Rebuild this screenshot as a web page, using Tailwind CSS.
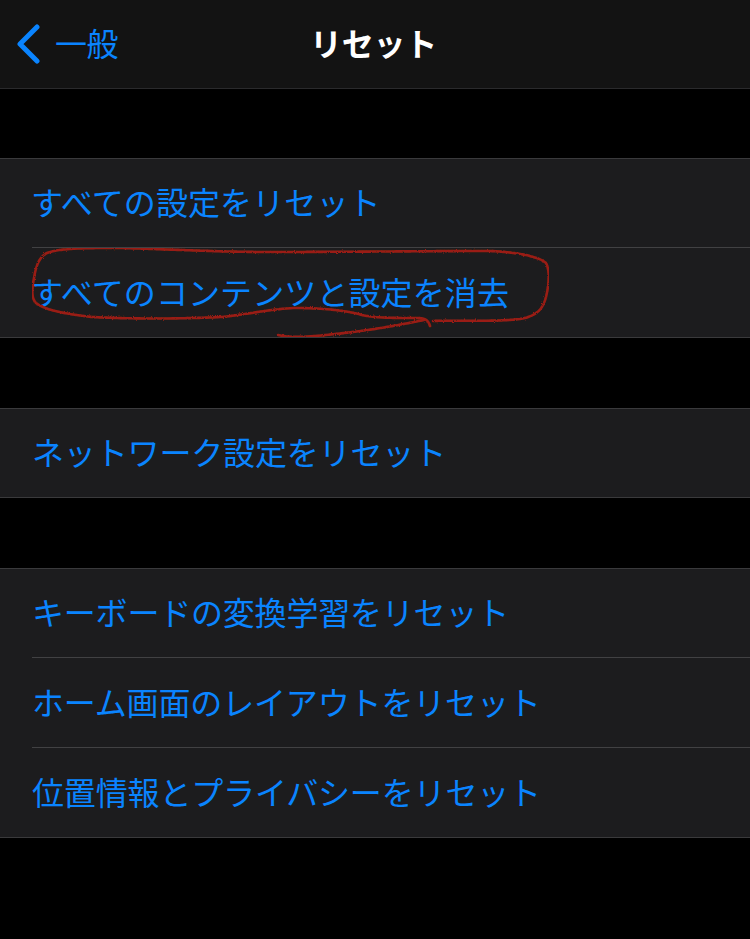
<!DOCTYPE html>
<html lang="ja">

<head>
    <meta charset="UTF-8">
    <meta name="viewport" content="width=device-width, initial-scale=1.0">
    <title>リセット</title>
    <script src="https://cdn.jsdelivr.net/npm/@tailwindcss/browser@4"></script>
</head>

<body class="bg-black">
    <div class="relative w-[750px] h-[939px] overflow-hidden bg-black font-['Noto_Sans_CJK_JP','Noto_Sans',sans-serif] text-[#0a84ff]">
        <!-- ナビゲーション -->
        <header class="relative flex items-center h-[89px] bg-[#131313] border-b border-[#2a2a2c]">
            <svg class="ml-[17px] w-[24px] h-[40px]" viewBox="0 0 24 40" fill="none">
                <path d="M20 3 L3 20 L20 37" stroke="#0a84ff" stroke-width="5" stroke-linecap="round" stroke-linejoin="round" />
            </svg>
            <span class="ml-[14px] pb-[4px] text-[32px] leading-none tracking-[-0.5px]">一般</span>
            <h1 class="absolute inset-x-0 pb-[4px] pr-[3px] text-center text-[32px] leading-none font-bold tracking-[-0.2px] text-white">リセット</h1>
        </header>

        <!-- リスト -->
        <section class="mt-[69px] bg-[#1c1c1e] border-y border-[#3a3a3c]">
            <div class="flex items-center h-[88px] pl-[31px] pb-[4px] text-[32px] tracking-[0.1px]">すべての設定をリセット</div>
            <div class="ml-[32px] h-px bg-[#414143]"></div>
            <div class="flex items-center h-[89px] pl-[31px] pb-[4px] text-[32px] tracking-[0.1px]">すべてのコンテンツと設定を消去</div>
        </section>

        <section class="mt-[70px] bg-[#1c1c1e] border-y border-[#3a3a3c]">
            <div class="flex items-center h-[88px] pl-[32px] pb-[4px] text-[32px] tracking-[-0.15px]">ネットワーク設定をリセット</div>
        </section>

        <section class="mt-[70px] bg-[#1c1c1e] border-y border-[#3a3a3c]">
            <div class="flex items-center h-[88px] pl-[32px] pb-[4px] text-[32px] tracking-[-0.2px]">キーボードの変換学習をリセット</div>
            <div class="ml-[32px] h-px bg-[#414143]"></div>
            <div class="flex items-center h-[89px] pl-[32px] pb-[4px] text-[32px] tracking-[-0.15px]">ホーム画面のレイアウトをリセット</div>
            <div class="ml-[32px] h-px bg-[#414143]"></div>
            <div class="flex items-center h-[89px] pl-[32px] pb-[4px] text-[32px] tracking-[-0.15px]">位置情報とプライバシーをリセット</div>
        </section>

        <!-- 手書きの赤丸 -->
        <svg class="absolute left-0 top-0 pointer-events-none" width="750" height="939" viewBox="0 0 750 939" fill="none">
            <defs>
                <filter id="pencil" x="0" y="0" width="100%" height="100%">
                    <feTurbulence type="fractalNoise" baseFrequency="0.9" numOctaves="2" seed="4" />
                    <feDisplacementMap in="SourceGraphic" scale="2.5" />
                </filter>
            </defs>
            <g filter="url(#pencil)" stroke="#9a1f12" stroke-width="2.6" stroke-linecap="round" stroke-linejoin="round" stroke-dasharray="3 0.7">
                <path d="M430 326 C428 320 426 318 415 318 C395 318 375 318 362 315 C345 310 320 308 295 308 C270 309 250 314 222 317 C180 319 130 319 92 317 C65 314 45 310 36 303 C31 298 32 288 34 278 C36 266 39 257 47 253 C60 248 85 248 120 248 C165 249 215 252 270 252 C340 252 430 251 490 251 C515 252 538 256 546 263 C550 270 549 285 546 297 C543 308 538 316 520 319 C495 322 460 320 433 321" />
                <path d="M278 335 C290 338 310 337 335 334 C365 331 395 326 424 320" />
            </g>
        </svg>
    </div>
</body>

</html>
